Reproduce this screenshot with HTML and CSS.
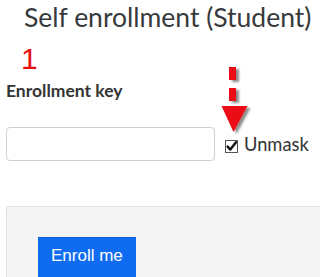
FILE: index.html
```html
<!DOCTYPE html>
<html lang="en">
<head>
<meta charset="utf-8">
<title>Self enrollment (Student)</title>
<link rel="stylesheet" href="styles.css">
</head>
<body>
<div class="page">
  <h2 class="title">Self enrollment (Student)</h2>
  <div class="step">1</div>
  <div class="field-label">Enrollment key</div>
  <div class="field-row">
    <input class="key-input" type="text" aria-label="Enrollment key">
    <label class="unmask">
      <svg class="check" width="13" height="13" viewBox="0 0 13 13" aria-hidden="true">
        <rect x="0.5" y="0.5" width="12" height="12" fill="#fff" stroke="#555"/>
        <path d="M2.6 6.6 L5.3 9.6 L11 2.2" fill="none" stroke="#111" stroke-width="2.4" stroke-linecap="round" stroke-linejoin="round"/>
      </svg>
      <span>Unmask</span>
    </label>
  </div>
  <div class="panel">
    <button class="enroll-btn" type="button">Enroll me</button>
  </div>
  <svg class="arrow" width="36" height="76" viewBox="0 0 36 76" aria-hidden="true">
    <defs>
      <filter id="sh" x="-30%" y="-30%" width="160%" height="160%">
        <feDropShadow dx="3" dy="2" stdDeviation="1.3" flood-color="#000" flood-opacity="0.45"/>
      </filter>
    </defs>
    <g filter="url(#sh)" fill="#ea1019">
      <rect x="9" y="3" width="7" height="13"/>
      <rect x="9" y="24" width="7" height="13"/>
      <polygon points="1.5,42 27.5,42 13.5,68"/>
    </g>
  </svg>
</div>
</body>
</html>
```

FILE: styles.css
```css
html, body {
  margin: 0;
  padding: 0;
  background: #fff;
}

.page {
  position: relative;
  box-sizing: border-box;
  height: 277px;
  overflow: hidden;
  padding-left: 6px;
  font-family: Lato, "Liberation Sans", sans-serif;
  color: #333;
}

.title {
  margin: 2px 0 0 18px;
  font-family: Lato, sans-serif;
  font-weight: 400;
  font-size: 26.5px;
  line-height: 31px;
  color: #373a3c;
  white-space: nowrap;
}

.step {
  margin: 9px 0 0 15px;
  font-family: "Liberation Sans", Arial, sans-serif;
  font-size: 30px;
  line-height: 33px;
  color: #e80f0f;
}

.field-label {
  margin-top: 4px;
  font-weight: 700;
  font-size: 17.5px;
  line-height: 24px;
  color: #333;
}

.field-row {
  display: flex;
  align-items: center;
  margin-top: 24px;
}

.key-input {
  box-sizing: border-box;
  width: 209px;
  height: 34px;
  margin: 0;
  padding: 4px 8px;
  border: 1px solid #cfcfcf;
  border-radius: 4px;
  background: #fff;
  font: 16px Lato, sans-serif;
}

.unmask {
  display: flex;
  align-items: center;
  gap: 6px;
  margin-left: 10px;
  font-size: 18.3px;
  line-height: 22px;
  color: #333;
}

.check {
  display: block;
  margin-top: 5px;
}

.panel {
  margin-top: 45px;
  padding: 30px 0 0 31px;
  background: #f4f4f4;
  border: 1px solid #e2e2e2;
  border-right: 0;
  border-bottom: 0;
  border-radius: 4px 0 0 0;
}

.enroll-btn {
  display: block;
  margin: 0;
  padding: 6px 13px 10px;
  border: 0;
  border-top: 1px solid #0a5fd6;
  background: #0f6cf0;
  color: #fff;
  font-family: "Liberation Sans", Arial, sans-serif;
  font-size: 17px;
  line-height: 24px;
  border-radius: 0;
}

.arrow {
  position: absolute;
  left: 220px;
  top: 64px;
}
```
